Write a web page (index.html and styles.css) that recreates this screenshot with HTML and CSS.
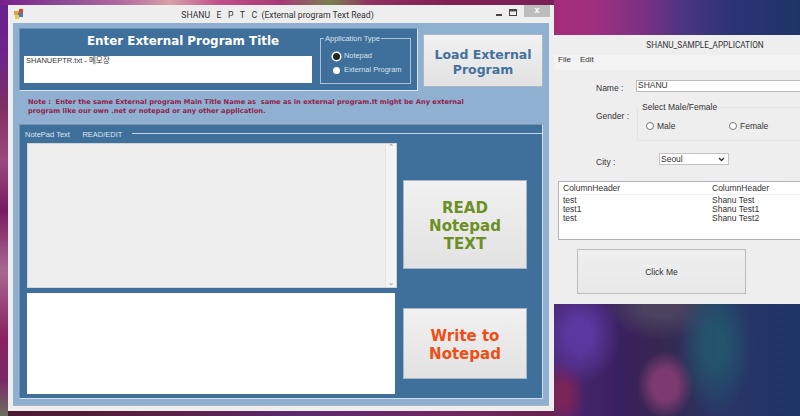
FILE: index.html
```html
<!DOCTYPE html>
<html lang="en">
<head>
<meta charset="utf-8">
<title>SHANU EPTC</title>
<link rel="stylesheet" href="styles.css">
</head>
<body>
<div class="desktop">
  <section class="window main-window">
    <header class="titlebar">
      <svg class="app-icon" width="10" height="10" viewBox="0 0 10 10"><rect x="0" y="2" width="5" height="4" fill="#e8a030"/><rect x="5" y="0" width="4" height="4" fill="#d84a30"/><rect x="4" y="4" width="5" height="4" fill="#4a78c8"/><rect x="1" y="6" width="4" height="4" fill="#e8c848"/></svg>
      <span class="title-text">SHANU&nbsp;&nbsp; E&nbsp;&nbsp; P&nbsp;&nbsp; T&nbsp;&nbsp; C&nbsp; (External program Text Read)</span>
      <div class="controls">
        <svg class="ctl" width="8" height="8" viewBox="0 0 8 8"><rect x="1" y="5" width="6" height="2" fill="#444"/></svg>
        <svg class="ctl" width="9" height="8" viewBox="0 0 9 8"><rect x=".5" y=".5" width="7" height="6" fill="none" stroke="#444"/><rect x="1" y="1" width="6" height="1.4" fill="#444"/></svg>
        <div class="close">x</div>
      </div>
    </header>
    <div class="client">
      <div class="top-row">
        <div class="title-panel">
          <div class="title-left">
            <h1 class="panel-heading">Enter External Program Title</h1>
            <div class="title-input">SHANUEPTR.txt - 메모장</div>
          </div>
          <fieldset class="app-type">
            <legend>Application Type</legend>
            <div class="radio-line"><span class="radio checked"></span>Notepad</div>
            <div class="radio-line"><span class="radio"></span>External Program</div>
          </fieldset>
        </div>
        <button class="btn load-btn">Load External<br>Program</button>
      </div>
      <p class="note">Note :&nbsp; Enter the same External program Main Title Name as&nbsp; same as in external program.It might be Any external<br>program like our own .net or notepad or any other application.</p>
      <div class="edit-panel">
        <div class="edit-head"><span class="edit-label">NotePad Text&nbsp;&nbsp;&nbsp;&nbsp;&nbsp;&nbsp;READ/EDIT</span><span class="edit-rule"></span></div>
        <div class="edit-body">
          <div class="text-col">
            <div class="read-area">
              <div class="scrollbar"><span class="chev">⌃</span><span class="chev">⌄</span></div>
            </div>
            <div class="write-area"></div>
          </div>
          <div class="btn-col">
            <button class="btn read-btn">READ<br>Notepad<br>TEXT</button>
            <button class="btn write-btn">Write to<br>Notepad</button>
          </div>
        </div>
      </div>
    </div>
  </section>

  <section class="window sample-window">
    <header class="sample-title">SHANU_SAMPLE_APPLICATION</header>
    <nav class="menu"><span>File</span><span>Edit</span></nav>
    <div class="form">
      <div class="name-row"><label class="lbl">Name :</label><div class="name-input">SHANU</div></div>
      <div class="gender-row">
        <label class="lbl gender-lbl">Gender :</label>
        <fieldset class="gender-group">
          <legend>Select Male/Female</legend>
          <div class="gender-opts">
            <div class="opt opt-male"><span class="radio2"></span>Male</div>
            <div class="opt"><span class="radio2"></span>Female</div>
          </div>
        </fieldset>
      </div>
      <div class="city-row"><label class="lbl">City :</label>
        <div class="select">Seoul<svg width="7" height="5" viewBox="0 0 7 5"><path d="M1 1l2.500 2.500L6 1" fill="none" stroke="#333" stroke-width="1.300"/></svg></div>
      </div>
      <div class="list">
        <div class="list-row list-head"><span class="c1">ColumnHeader</span><span>ColumnHeader</span></div>
        <div class="list-row"><span class="c1">test</span><span>Shanu Test</span></div>
        <div class="list-row"><span class="c1">test1</span><span>Shanu Test1</span></div>
        <div class="list-row"><span class="c1">test</span><span>Shanu Test2</span></div>
      </div>
      <button class="click-btn">Click Me</button>
    </div>
  </section>
</div>
</body>
</html>
```
FILE: styles.css
```css
* { box-sizing: border-box; }
html, body { margin: 0; padding: 0; width: 800px; height: 416px; overflow: hidden; }
.desktop {
  position: relative;
  width: 800px;
  height: 416px;
  overflow: hidden;
  background-color: #4a1f5c;
  background-repeat: no-repeat;
  background-image:
    linear-gradient(90deg, #7a1f8c 0, #8a4a94 60px, #b06aa0 120px, #d8a0a8 170px, #c05088 220px, #a83878 280px, #7a8050 330px, #903060 370px, #802050 450px, #7a2058 554px),
    linear-gradient(180deg, #6a2090 0, #6e2488 60px, #80305f 110px, #9a4a80 160px, #7a1a62 210px, #a86890 270px, #8a2060 340px, #7a2868 380px, #6c7060 416px),
    linear-gradient(90deg, #4a1a30 0, #5a2040 150px, #5c2a70 300px, #702860 450px, #6a2050 554px),
    radial-gradient(ellipse 28px 34px at 665px 385px, #7c3a70 0 45%, rgba(124,58,112,0) 100%),
    radial-gradient(ellipse 38px 70px at 715px 345px, rgba(34,88,110,.85) 0 30%, rgba(34,88,110,0) 100%),
    radial-gradient(ellipse 40px 50px at 580px 335px, #5a38a0 0 30%, rgba(90,56,160,0) 100%),
    radial-gradient(ellipse 60px 34px at 662px 306px, #4c4260 0 30%, rgba(76,66,96,0) 100%),
    radial-gradient(ellipse 24px 36px at 562px 395px, #7a2458 0 30%, rgba(122,36,88,0) 100%),
    linear-gradient(90deg, #4c2670 554px, #3a2060 620px, #36274f 660px, #2a3566 720px, #1f3468 800px);
  background-size: 554px 5px, 8px 416px, 554px 6px, 100% 100%, 100% 100%, 100% 100%, 100% 100%, 100% 100%, 100% 100%;
  background-position: 0 0, 0 0, 0 410px, 0 0, 0 0, 0 0, 0 0, 0 0, 0 0;
}
.desktop::before {
  content: "";
  position: absolute;
  left: 554px; top: 0; width: 246px; height: 35px;
  background: linear-gradient(90deg, #a42a78 0, #a03080 40px, #7a3084 90px, #4a3580 130px, #2b3374 180px, #1f3568 246px);
}
.window { position: absolute; font-family: "Liberation Sans", sans-serif; }

/* main window */
.main-window {
  left: 8px; top: 5px; width: 546px; height: 406px;
  background: #eeeeee;
  display: flex; flex-direction: column;
  padding: 0 5px 5px;
}
.titlebar { position: relative; height: 18px; flex: none; display: flex; align-items: center; justify-content: center; }
.app-icon { position: absolute; left: 1px; top: 4px; }
.title-text { font: 8.700px Roboto, sans-serif; color: #333; margin-right: 7px; white-space: nowrap; position: relative; top: 1px; }
.controls { position: absolute; right: -1px; top: 0; display: flex; align-items: flex-start; }
.ctl { margin-top: 4px; margin-right: 6px; }
.close { width: 26px; height: 12px; background: #bdbdbd; color: #fff; font: bold 9px/11px "Liberation Sans", sans-serif; text-align: center; }
.client {
  flex: 1; min-height: 0;
  background: #8fb0d0;
  border-bottom: 1px solid #aab4bf;
  padding: 5px 6px 0;
}
.top-row { display: flex; gap: 5px; height: 63px; align-items: flex-start; }
.title-panel {
  width: 399px; height: 63px;
  background: #3f6f9b;
  border: 1px solid #d8e4ee; border-top-color: #6f8faf; border-left-color: #6f8faf;
  display: flex; padding: 0 6px 0 4px;
}
.title-left { width: 288px; flex: none; display: flex; flex-direction: column; }
.panel-heading { margin: 4px 0 0; padding-left: 30px; height: 23px; font: bold 11.900px/17px "DejaVu Sans", sans-serif; color: #fff; text-align: center; white-space: nowrap; }
.title-input { height: 27px; background: #fff; font: 7.500px/10px "Liberation Sans", "Noto Sans CJK KR", sans-serif; color: #333; padding: 0 2px; white-space: nowrap; }
.app-type {
  margin: 5px 0 0 8px; width: 91px; height: 50px; padding: 0;
  border: 1px solid #a9c2d9; color: #d8e4ee;
  font: 7.400px/14px "Liberation Sans", sans-serif;
}
.app-type legend { padding: 0 1px; margin-left: 3px; line-height: 9px; color: #d8e4ee; font-size: 7.500px; white-space: nowrap; }
.radio-line { display: flex; align-items: center; height: 14px; padding-left: 12px; white-space: nowrap; position: relative; top: 6px; }
.radio { width: 7px; height: 7px; border-radius: 50%; background: #fff; margin-right: 4px; flex: none; }
.radio.checked { background: #222; box-shadow: 0 0 0 1.500px #fff; }
.btn {
  border: 1px solid #a8b8c6; padding: 0; margin: 0;
  background: linear-gradient(#f1f1f1, #e2e2e2);
  font-family: "DejaVu Sans", sans-serif; font-weight: bold; text-align: center;
}
.load-btn { width: 120px; height: 53px; margin-top: 6px; color: #44719d; font-size: 12.500px; line-height: 15px; padding-top: 3px; }
.note { margin: 7px 0 0 9px; height: 26px; font: bold 6.700px/9px "DejaVu Sans", sans-serif; color: #8f1f4e; white-space: nowrap; }
.edit-panel {
  width: 524px; height: 275px;
  background: #3f6f9b;
  border-right: 1px solid #cfdfee; border-bottom: 1px solid #cfdfee; border-top: 1px solid #7c96ae; border-left: 1px solid #7c96ae;
  padding: 0 0 0 7px;
}
.edit-head { height: 18px; display: flex; align-items: center; }
.edit-label { font: 7.500px "Liberation Sans", sans-serif; color: #dbe6f0; margin-left: -2px; white-space: nowrap; }
.edit-rule { flex: 1; height: 1px; background: #c4d6e6; margin-left: 10px; position: relative; top: -1px; }
.edit-body { display: flex; }
.text-col { width: 370px; flex: none; display: flex; flex-direction: column; gap: 5px; }
.read-area { height: 145px; background: #eeeeee; border: 1px solid #cfd4d8; position: relative; }
.scrollbar { position: absolute; right: 0; top: 0; bottom: 0; width: 11px; background: #f4f4f4; border-left: 1px solid #e4e4e4; display: flex; flex-direction: column; justify-content: space-between; align-items: center; font: 8px/8px "DejaVu Sans", sans-serif; color: #999; }
.chev { display: block; height: 8px; }
.write-area { width: 368px; height: 101px; background: #fff; }
.btn-col { margin-left: 6px; width: 124px; padding-top: 37px; display: flex; flex-direction: column; gap: 39px; }
.read-btn { width: 124px; height: 89px; color: #6d8f24; font-size: 15px; line-height: 18px; padding-top: 2px; }
.write-btn { width: 124px; height: 71px; color: #ef4f14; font-size: 15px; line-height: 18px; padding-top: 2px; }

/* sample window */
.sample-window {
  left: 554px; top: 35px; width: 302px; height: 269px;
  background: #eeeeee;
  font-size: 8px; color: #333;
}
.sample-title { height: 20px; font: 8.200px/20px Roboto, sans-serif; text-align: center; color: #333; }
.menu { height: 15px; display: flex; gap: 9px; padding-left: 4px; font-size: 8px; line-height: 10px; background: #f3f3f3; }
.form { padding-left: 4px; }
.lbl { font-size: 8.500px; }
.name-row { display: flex; align-items: center; height: 12px; margin-top: 10px; }
.name-row .lbl { margin-left: 38px; width: 40px; position: relative; top: 2px; }
.name-input { width: 200px; height: 12px; background: #fff; border: 1px solid #bcbcbc; font-size: 8.500px; line-height: 9px; padding-left: 1px; }
.gender-row { display: flex; margin-top: 11px; height: 39px; }
.gender-lbl { margin-left: 38px; width: 41px; padding-top: 8px; }
.gender-group { margin: 0; padding: 0; width: 200px; height: 38px; border: 1px solid #e4e4e4; }
.gender-group legend { padding: 0 0 0 4px; font-size: 8.500px; line-height: 9px; margin-left: 0; }
.gender-opts { display: flex; padding: 9px 0 0 8px; }
.opt { display: flex; align-items: center; height: 10px; font-size: 8.500px; }
.opt-male { width: 83px; }
.radio2 { width: 8px; height: 8px; border: 1px solid #777; border-radius: 50%; background: #fff; margin-right: 3px; }
.city-row { display: flex; align-items: center; height: 12px; margin-top: 11px; }
.city-row .lbl { margin-left: 38px; width: 63px; position: relative; top: 3px; }
.select { width: 70px; height: 12px; background: #fff; border: 1px solid #c4c4c4; font-size: 8.500px; line-height: 9px; padding: 0 3px 0 1px; display: flex; justify-content: space-between; align-items: center; }
.list { margin-top: 16px; width: 260px; height: 59px; background: #fff; border: 1px solid #aeb4ba; padding-top: 1px; }
.list-row { display: flex; height: 9px; padding-left: 4px; font-size: 8.500px; line-height: 9px; white-space: nowrap; }
.list-head { height: 12px; border-bottom: 1px solid #f0f0f0; margin-bottom: 1px; line-height: 10px; }
.c1 { width: 149px; flex: none; }
.click-btn { display: block; margin: 9px 0 0 19px; width: 169px; height: 45px; background: linear-gradient(#efefef, #e8e8e8); border: 1px solid #bcbcbc; font: 8.500px "Liberation Sans", sans-serif; color: #333; padding: 0; }
```
